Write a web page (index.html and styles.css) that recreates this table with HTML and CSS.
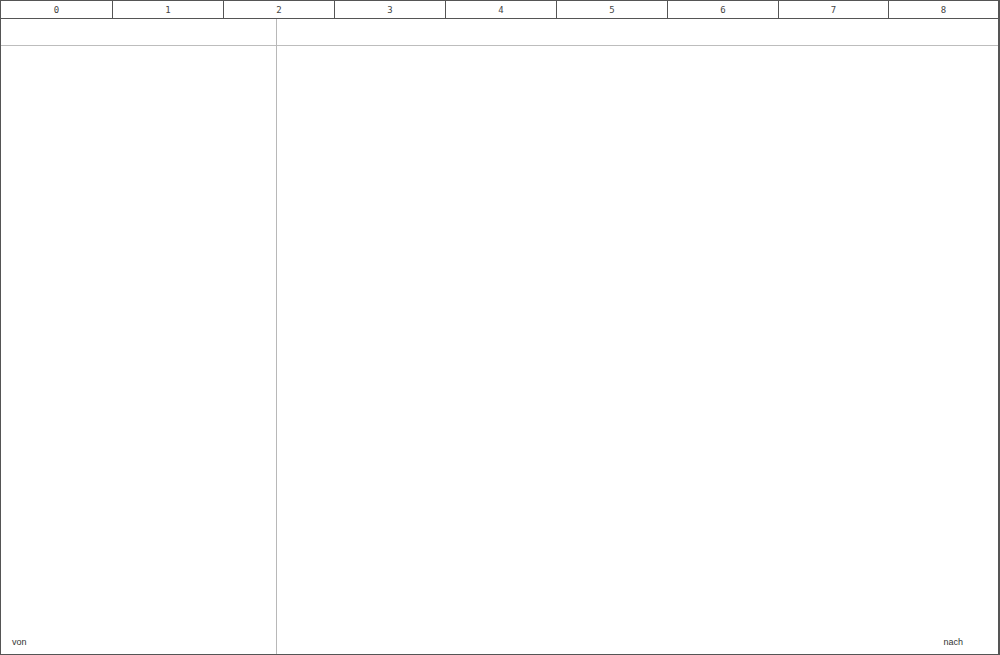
FILE: index.html
```html
<!DOCTYPE html>
<html lang="en">
<head>
    <meta charset="UTF-8">
    <meta name="viewport" content="width=device-width, initial-scale=1.0">
    <title>Zeitleiste</title>
    <link rel="stylesheet" href="styles.css">
</head>
<body>
    <div class="frame">
        <div class="ruler">
            <div class="tick">0</div>
            <div class="tick">1</div>
            <div class="tick">2</div>
            <div class="tick">3</div>
            <div class="tick">4</div>
            <div class="tick">5</div>
            <div class="tick">6</div>
            <div class="tick">7</div>
            <div class="tick">8</div>
        </div>
        <div class="main">
            <div class="pane left">
                <div class="band"></div>
                <div class="body"></div>
                <div class="label">von</div>
            </div>
            <div class="pane right">
                <div class="band"></div>
                <div class="body"></div>
                <div class="label end">nach</div>
            </div>
        </div>
    </div>
</body>
</html>
```

FILE: styles.css
```css
body {
    margin: 0;
    font-family: "Liberation Sans", Arial, sans-serif;
    background-color: #ffffff;
    color: #333333;
}
.frame {
    box-sizing: border-box;
    width: 1000px;
    height: 655px;
    border: 1px solid #555555;
    border-right-width: 2px;
    display: flex;
    flex-direction: column;
}
.ruler {
    display: grid;
    grid-template-columns: repeat(7, 111px) 110px 1fr;
    height: 17px;
    border-bottom: 1px solid #555555;
    overflow: hidden;
}
.tick {
    border-left: 1px solid #555555;
    font-family: "DejaVu Sans Mono", monospace;
    font-size: 9px;
    line-height: 19px;
    text-align: center;
    color: #444444;
}
.tick:first-child {
    border-left: none;
}
.main {
    flex: 1;
    display: grid;
    grid-template-columns: 276px 1fr;
}
.pane {
    display: flex;
    flex-direction: column;
}
.pane.left {
    border-right: 1px solid #b8b8b8;
}
.band {
    height: 26px;
    border-bottom: 1px solid #bdbdbd;
}
.body {
    flex: 1;
}
.label {
    font-size: 9px;
    padding: 0 0 7px 11px;
}
.label.end {
    text-align: right;
    padding-right: 35px;
}
```
